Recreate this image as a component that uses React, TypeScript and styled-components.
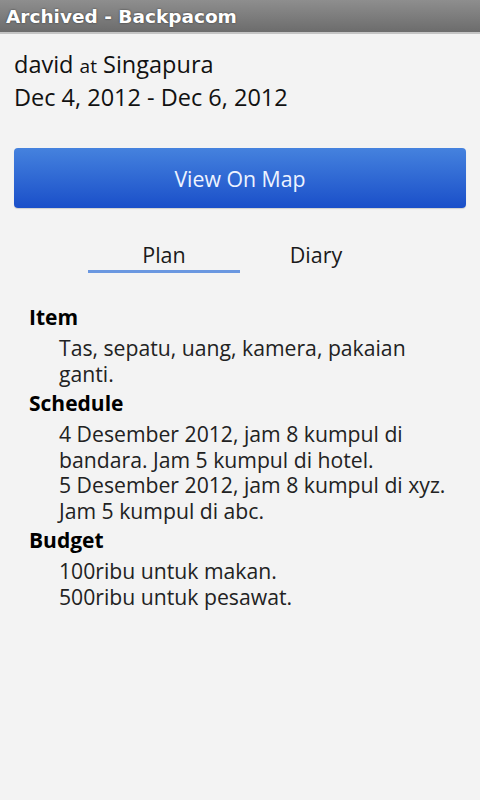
import React, { FC } from "react"
import styled, { createGlobalStyle } from "styled-components"

const GlobalStyle = createGlobalStyle`
	html, body {
		margin: 0;
		padding: 0;
		background: #f3f3f3;
	}

	body {
		font-family: "Open Sans", "DejaVu Sans", sans-serif;
		color: #1a1a1a;
	}
`

type Section = {
	title: string
	lines: string[]
}

const sections: Section[] = [
	{ title: "Item", lines: ["Tas, sepatu, uang, kamera, pakaian ganti."] },
	{
		title: "Schedule",
		lines: [
			"4 Desember 2012, jam 8 kumpul di bandara. Jam 5 kumpul di hotel.",
			"5 Desember 2012, jam 8 kumpul di xyz. Jam 5 kumpul di abc.",
		],
	},
	{ title: "Budget", lines: ["100ribu untuk makan.", "500ribu untuk pesawat."] },
]

const App: FC = () => {
	return (
		<Screen>
			<GlobalStyle />
			<TitleBar>Archived - Backpacom</TitleBar>
			<Header>
				<HeaderLine>
					david <Small>at</Small> Singapura
				</HeaderLine>
				<HeaderLine>Dec 4, 2012 - Dec 6, 2012</HeaderLine>
			</Header>
			<MapButton type="button">View On Map</MapButton>
			<Tabs>
				<Tab active>Plan</Tab>
				<Tab>Diary</Tab>
			</Tabs>
			<Content>
				{sections.map((s) => (
					<SectionBlock key={s.title}>
						<SectionTitle>{s.title}</SectionTitle>
						{s.lines.map((line) => (
							<Body key={line}>{line}</Body>
						))}
					</SectionBlock>
				))}
			</Content>
		</Screen>
	)
}

export default App

const Screen = styled.div`
	width: 480px;
	min-height: 800px;
	background: #f3f3f3;
`

const TitleBar = styled.div`
	height: 32px;
	padding-left: 6px;

	display: flex;
	align-items: center;

	background: linear-gradient(#8e8e8e, #6c6c6c);
	border-bottom: 2px solid #c4c4c4;

	color: #fff;
	font-family: "DejaVu Sans", sans-serif;
	font-size: 18.5px;
	font-weight: bold;
	text-shadow: 0 0 2px rgba(0, 0, 0, 0.6);
`

const Header = styled.div`
	padding: 15px 14px 0;
`

const HeaderLine = styled.div`
	font-size: 23.5px;
	line-height: 31px;
	color: #111;
`

const Small = styled.span`
	font-size: 19px;
`

const MapButton = styled.button`
	display: block;
	width: 452px;
	height: 60px;
	margin: 35px 14px 0;

	border: 0;
	border-radius: 4px;
	background: linear-gradient(#4582de, #1a4fc9);
	box-shadow: 0 1px 1px rgba(0, 0, 0, 0.15);

	color: #eef3ff;
	font-family: "Open Sans", sans-serif;
	font-size: 21.3px;
`

const Tabs = styled.div`
	margin-top: 31px;

	display: flex;
	justify-content: center;
`

const Tab = styled.div<{ active?: boolean }>`
	width: 152px;
	height: 31px;

	text-align: center;
	font-size: 21.5px;
	line-height: 31px;

	border-bottom: 3px solid ${(p) => (p.active ? "#6a97e0" : "transparent")};
`

const Content = styled.div`
	padding: 32px 14px 0 29px;
`

const SectionBlock = styled.div`
	& + & {
		margin-top: 5px;
	}
`

const SectionTitle = styled.div`
	padding-bottom: 5px;

	font-size: 21px;
	font-weight: bold;
	line-height: 25px;
	color: #000;
`

const Body = styled.div`
	padding-left: 30px;
	width: 392px;

	font-size: 21.2px;
	line-height: 25.5px;
	color: #222;
`
